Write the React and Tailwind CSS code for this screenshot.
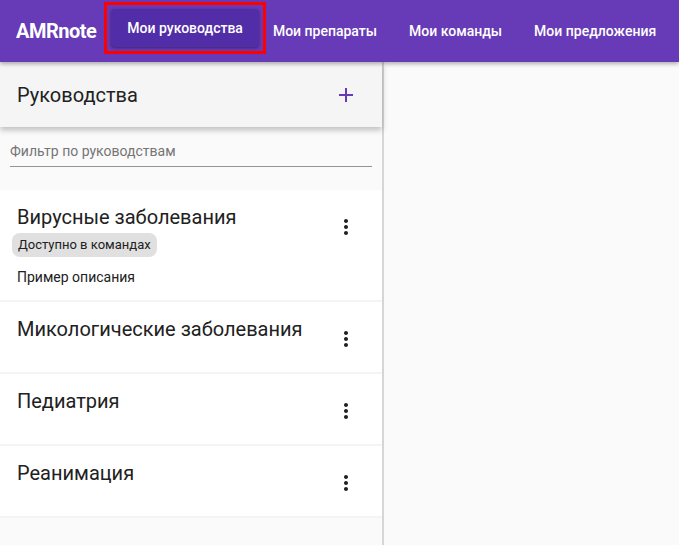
import { MdAdd, MdMoreVert } from "react-icons/md";

const guides = [
  { title: "Вирусные заболевания", shared: true, description: "Пример описания" },
  { title: "Микологические заболевания" },
  { title: "Педиатрия" },
  { title: "Реанимация" },
];

function NavBar() {
  return (
    <header className="h-[62px] bg-[#673ab7] flex items-center shadow-[0_2px_4px_rgba(0,0,0,0.3)] relative z-20 text-white">
      <div className="pl-4 pr-[8px] text-[20px] font-bold tracking-tight">AMRnote</div>
      <div className="border-[3px] border-[#ff0000] p-[4px] mb-[3px] mt-[-3px]">
        <div className="h-[38px] px-[16px] flex items-center rounded bg-[#512da8] shadow-[0_1px_3px_rgba(0,0,0,0.4)] text-[14px] font-medium">
          Мои руководства
        </div>
      </div>
      <nav className="flex items-center gap-8 ml-[7px] text-[14px] font-medium">
        <span>Мои препараты</span>
        <span>Мои команды</span>
        <span>Мои предложения</span>
      </nav>
    </header>
  );
}

function GuideItem({ title, shared, description }) {
  return (
    <div className="bg-white border-b-2 border-[#f4f4f4] flex justify-between pl-[17px] pr-[24px] pt-[13px] pb-[13px] min-h-[72px]">
      <div className="flex flex-col items-start">
        <div className="text-[20px] leading-[28px] text-[#212121]">{title}</div>
        {shared && (
          <div className="mt-[2px] ml-[-5px] h-[24px] px-[6px] flex items-center rounded-lg bg-[#e0e0e0] text-[13px] text-[#212121]">
            Доступно в командах
          </div>
        )}
        {description && (
          <div className="mt-[10px] text-[14px] leading-[20px] text-[#212121]">{description}</div>
        )}
      </div>
      <MdMoreVert className="mt-[12px] text-[24px] text-[#212121] shrink-0" />
    </div>
  );
}

export default function App() {
  return (
    <div className="h-screen flex flex-col bg-[#fafafa] font-['Roboto',sans-serif] overflow-hidden">
      <NavBar />
      <div className="flex flex-1 min-h-0">
        <aside className="w-[384px] border-r-2 border-[#d6d6d6] bg-[#fafafa] flex flex-col">
          <div className="h-[65px] bg-[#f5f5f5] flex items-center justify-between pl-[17px] pr-[24px] shadow-[0_3px_6px_rgba(0,0,0,0.25)] relative z-10">
            <h2 className="text-[20px] text-[#212121]">Руководства</h2>
            <MdAdd className="text-[24px] text-[#673ab7]" />
          </div>
          <div className="h-[63px] px-[10px] pt-[14px]">
            <div className="border-b border-[#949494] pb-[4px] text-[14px] text-[#757575]">
              Фильтр по руководствам
            </div>
          </div>
          {guides.map((g) => (
            <GuideItem key={g.title} {...g} />
          ))}
        </aside>
        <main className="flex-1 bg-[#fafafa]" />
      </div>
    </div>
  );
}
